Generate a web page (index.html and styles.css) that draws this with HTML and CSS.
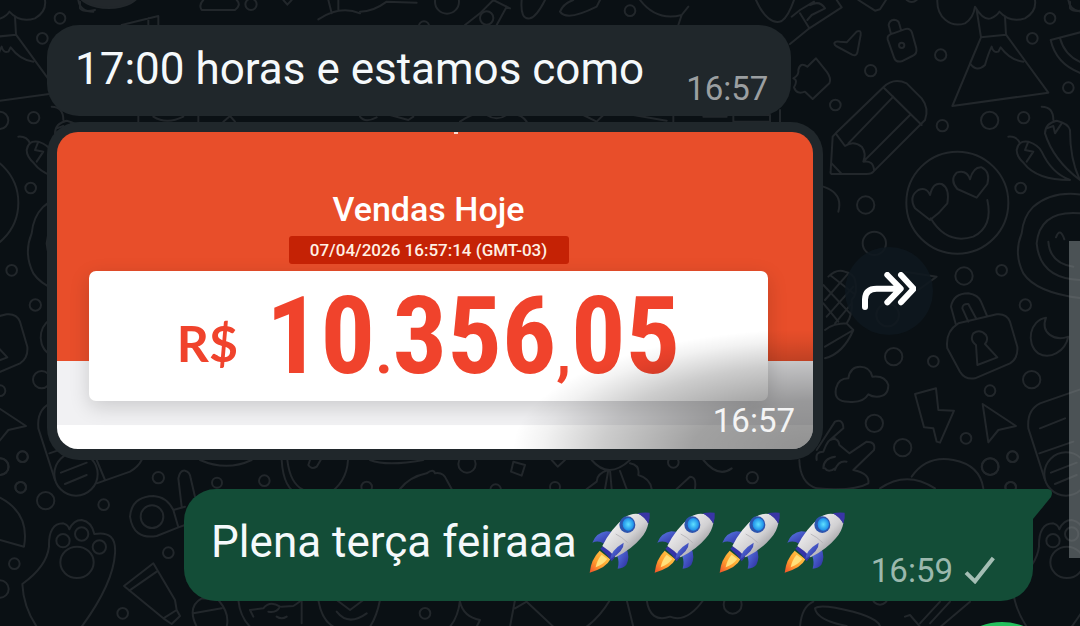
FILE: index.html
```html
<!DOCTYPE html>
<html lang="pt-BR">
<head>
    <meta charset="UTF-8">
    <meta name="viewport" content="width=device-width, initial-scale=1.0">
    <title>Conversa</title>
    <link rel="stylesheet" href="styles.css">
</head>
<body>

<svg class="wallpaper" viewBox="0 0 3240 1878" preserveAspectRatio="xMidYMin slice" aria-hidden="true">
    <defs>
        <g id="doodles">
            <!-- top right -->
            <g transform="translate(2160 0)">
                <path d="M108 0C130 50 160 75 185 63C205 50 215 20 222 0M215 50L240 30L282 5M240 40L268 85L365 22L350 0M262 60L275 45L315 25Q300 0 270 15M268 85L210 132"/>
                <path d="M415 0L465 32L480 28L498 0M560 0Q575 12 590 0"/>
                <path d="M343 130Q345 122 360 125L380 127L410 95Q424 88 422 105L412 158Q408 170 396 164L348 138Q343 135 343 130Z"/>
                <path d="M520 100L553 88Q570 82 576 98L589 145Q592 162 577 168L545 184Q527 188 522 172L503 118Q500 105 520 100ZM512 98L506 75Q508 60 522 59Q536 60 538 72L543 90"/>
                <circle cx="545" cy="136" r="8"/>
                <path d="M652 0C650 50 690 85 735 70Q760 55 765 20Q790 62 812 55Q830 48 838 35Q870 70 915 55Q950 35 945 0M770 30L783 112L858 104L855 50M783 112L697 318L985 278L858 104M783 112L750 190Q770 218 795 195Q805 160 815 140Q820 160 835 155L842 142Q870 180 910 185"/>
                <path d="M288 175L262 200Q240 185 235 210Q238 225 220 235Q235 240 222 262Q230 285 255 275L278 297L328 250Q335 235 320 215Z"/>
                <path d="M347 400L490 262Q520 232 560 250L605 295Q628 325 615 360L460 515Q455 522 440 522H335Q330 520 332 512L338 410ZM490 262L605 375M520 290L385 430M570 345L430 485M347 400L375 438Q400 420 425 440Q440 460 430 485Q460 480 462 510M335 490L365 522"/>
                <circle cx="712" cy="608" r="153"/>
                <path d="M630 660L585 625Q565 590 595 570Q620 560 630 585Q640 545 665 552Q690 565 682 610L655 640ZM770 593L712 567Q688 540 710 518Q740 508 750 538Q760 500 785 502Q812 515 802 552ZM802 600Q820 680 760 710Q680 735 632 655"/>
                <path d="M865 410Q890 408 900 430M890 450Q895 420 925 425Q955 435 965 455Q995 520 1050 540Q950 540 912 490Q890 470 890 450ZM925 425L915 450L940 455L920 485M965 320Q1000 320 1000 360M975 400Q975 370 1010 362Q1045 370 1050 390Q1050 480 1080 540Q1000 480 975 400ZM980 385L1000 378L1005 400L1025 370"/>
                <path d="M992 120L1100 92M992 120Q1010 200 1100 225M1020 115Q1035 170 1090 190"/>
                <path d="M1045 0Q1050 35 1090 35M310 560Q370 580 355 635"/>
                <circle cx="990" cy="55" r="16"/><circle cx="937" cy="115" r="16"/><circle cx="1045" cy="263" r="16"/><circle cx="662" cy="165" r="17"/><circle cx="452" cy="212" r="17"/><circle cx="346" cy="315" r="16"/><circle cx="667" cy="377" r="17"/><circle cx="809" cy="361" r="26"/><circle cx="911" cy="353" r="17"/><circle cx="902" cy="564" r="16"/><circle cx="437" cy="615" r="26"/>
                <path d="M0 345H150V365H40V345M180 330V365"/>
            </g>
            <!-- middle right -->
            <g transform="translate(2160 600)">
                <path d="M1090 -15Q1000 -30 940 20Q910 50 905 100Q880 160 910 220Q950 280 1090 295"/>
                <path d="M1080 40Q960 30 950 130Q960 240 1090 240M985 125Q990 190 1060 200M1008 112Q1020 80 1033 118"/>
                <circle cx="463" cy="130" r="35"/><circle cx="503" cy="345" r="34"/><circle cx="732" cy="228" r="26"/><circle cx="845" cy="211" r="16"/><circle cx="916" cy="315" r="17"/><circle cx="521" cy="470" r="26"/><circle cx="640" cy="484" r="16"/><circle cx="935" cy="539" r="26"/><circle cx="810" cy="572" r="16"/>
                <path d="M325 230Q350 205 375 215Q400 220 405 240Q415 280 395 300Q400 340 380 370L400 390Q370 460 315 475M315 390Q340 370 380 370M400 390L315 440M330 225L400 280M310 255L390 340M310 310L355 365M385 220L315 300M400 260L320 350M395 310L345 370M555 215L650 230L595 270"/>
                <path d="M715 370L830 343Q860 340 870 365L892 440Q895 475 870 490L765 535Q735 540 720 515L682 445Q675 395 715 370ZM708 375L693 320Q700 280 745 280Q775 285 783 305L800 345M745 365L727 325Q728 310 745 312L768 355M768 435Q748 420 760 400Q780 385 798 405Q806 420 795 432L832 472L772 495Z"/>
                <path d="M978 353C930 360 915 430 955 460C990 480 1035 455 1045 410C1005 425 960 400 978 353Z"/>
                <path d="M385 605Q340 605 348 565Q355 535 385 535Q390 500 420 500Q450 500 457 530Q495 525 505 555Q505 590 470 590Q455 590 445 583Q430 610 385 605Z"/>
                <path d="M585 582L648 565L655 630L702 632L660 728L650 725L640 685L612 682ZM788 612L888 678L835 690L805 727Z"/>
            </g>
            <!-- bottom right -->
            <g transform="translate(2160 1200)">
                <circle cx="463" cy="70" r="26"/><circle cx="548" cy="143" r="26"/><circle cx="738" cy="115" r="16"/><circle cx="878" cy="170" r="16"/><circle cx="811" cy="200" r="25"/><circle cx="97" cy="233" r="17"/><circle cx="872" cy="262" r="16"/><circle cx="38" cy="614" r="27"/><circle cx="480" cy="590" r="24"/>
                <path d="M290 265Q240 250 238 180M290 150L345 65Q370 55 370 85L330 120Q355 110 358 135L388 160L440 125Q468 125 462 150L400 210Q450 220 445 250Q400 275 290 265M290 180Q285 155 310 155Q325 110 345 115M310 205Q310 175 345 170M345 210Q355 180 380 185M315 205Q325 220 345 205"/>
                <path d="M480 265Q560 210 645 265M575 230Q620 165 700 180Q780 195 790 265"/>
                <path d="M1090 -35L960 10Q920 30 925 85L975 240M960 85L1035 55M958 160L1060 125"/>
                <ellipse cx="1038" cy="222" rx="65" ry="65"/>
                <path d="M993 218L1070 188M1005 252L1070 225M240 680Q245 620 280 605M285 625Q300 610 400 635Q490 660 480 690M285 625Q290 660 380 678M555 650L570 645L600 680M600 670L660 605M630 670L690 605M650 690L750 605"/>
            </g>
            <!-- bottom left -->
            <g transform="translate(0 1200)">
                <circle cx="67" cy="170" r="16"/><circle cx="62" cy="262" r="16"/><circle cx="137" cy="302" r="26"/><circle cx="311" cy="314" r="16"/><circle cx="475" cy="233" r="17"/><circle cx="651" cy="248" r="15"/><circle cx="793" cy="242" r="16"/><circle cx="505" cy="458" r="16"/><circle cx="43" cy="491" r="16"/><circle cx="0" cy="567" r="26"/><circle cx="368" cy="640" r="16"/><circle cx="0" cy="200" r="25"/>
                <path d="M110 680Q70 620 67 552Q140 500 147 440Q145 370 190 370Q205 375 208 388Q220 360 245 360Q275 365 283 402Q350 390 345 460Q340 550 245 680"/>
                <circle cx="189" cy="422" r="20"/><circle cx="245" cy="402" r="20"/><circle cx="298" cy="441" r="20"/><ellipse cx="231" cy="487" rx="50" ry="47"/>
                <path d="M0 293Q90 340 72 440L0 420"/>
                <circle cx="456" cy="350" r="34"/>
                <path d="M535 382L470 408Q400 420 390 350Q395 290 460 288Q500 290 520 330L555 320M520 330L535 382L555 375M545 320L535 235Q540 210 555 212Q570 215 572 235L585 290"/>
                <path d="M460 490L372 558L490 655L530 630L525 600ZM470 515L388 572M490 655L515 672L540 648L530 630"/>
                <path d="M290 180L315 240M290 250L390 215Q415 200 425 180M600 180Q680 215 755 180M845 180Q850 270 900 285H980Q1040 250 1044 180M862 180Q870 250 910 270M930 180L925 195Q935 210 950 200L962 180"/>
                <path d="M590 680Q560 620 605 595L655 600Q690 640 680 680M580 640L665 625M715 600Q720 650 750 680M760 650L750 630L790 625Q810 600 840 620Q830 640 805 635M845 620L880 618Q900 605 910 595M830 650Q845 660 860 650M905 600V670M955 600Q965 660 1000 680M1010 635Q1045 680 1100 640M1010 600L1050 630L1090 600M1140 600Q1130 650 1110 680M1380 600Q1375 650 1350 680M1380 605Q1390 650 1440 660L1430 680M1530 680L1545 600M1545 625L1580 605L1660 680M1830 600Q1800 650 1760 680M1880 600L1900 680M1940 600Q1950 670 2010 650Q2060 670 2110 600"/>
                <circle cx="1275" cy="640" r="16"/>
            </g>
            <!-- strips between the bubbles -->
            <g transform="translate(870 1365)">
                <path d="M240 15Q290 35 400 15M330 102Q360 65 410 55Q430 40 435 55Q460 50 470 75L485 102M670 20L705 30L695 62L663 50ZM785 15L803 35L825 15M905 15Q955 75 1020 15M955 45L945 102M960 45L965 102M890 102L920 80Q920 55 955 45M990 48L1010 102M1020 25Q1050 30 1045 60Q1080 70 1085 102M1160 102L1200 65Q1220 65 1215 100M1240 15Q1285 70 1325 40"/>
                <circle cx="531" cy="27" r="26"/><circle cx="230" cy="96" r="16"/><circle cx="617" cy="104" r="16"/><circle cx="795" cy="96" r="15"/><circle cx="1150" cy="22" r="16"/>
            </g>
            <path d="M1240 350L1225 360L1170 345M1380 365Q1430 330 1460 345Q1490 365 1520 345Q1560 335 1580 365M1750 345L1790 365L1810 345M1900 345L2000 362M2020 345V365M2110 350H2180M415 345V365M460 350Q500 375 550 350M595 345V365M670 365L690 348L705 365M1080 350Q1095 370 1130 352"/>
            <!-- top edge -->
            <path d="M240 5V25Q250 38 285 30M365 75L475 48V75M445 55V75M610 0Q595 15 605 30H705Q725 15 710 0M985 0L995 40M1015 0V30M955 58Q1020 15 1080 40M850 0L862 14L875 0"/>
            <path d="M1080 35Q1120 35 1160 5L1250 8M1395 75L1440 40L1480 0M1490 75L1520 20M1480 0L1530 25M1565 0Q1560 60 1590 55Q1610 50 1635 0M1680 35Q1690 10 1720 0M1680 35Q1700 65 1790 20L1800 0M1920 0Q1970 65 2045 45L2065 20M2045 45L2035 75"/>
            <circle cx="753" cy="13" r="17"/><circle cx="1341" cy="5" r="36"/><circle cx="1460" cy="54" r="20"/><circle cx="1890" cy="32" r="16"/><circle cx="1272" cy="80" r="16"/>
        </g>
    </defs>
    <use href="#doodles"/>
    <use href="#doodles" x="-2970"/>
    <use href="#doodles" x="2970"/>
    <ellipse class="blob" cx="326" cy="-24" rx="92" ry="48"/>
</svg>

<!-- rocket emoji, used by the outgoing message -->
<svg class="sprite" aria-hidden="true">
    <defs>
        <linearGradient id="hull" x1="0" y1="0" x2="1" y2="1">
            <stop offset="0.2" stop-color="#f4f3f4"/>
            <stop offset="0.55" stop-color="#d2d1d3"/>
            <stop offset="0.8" stop-color="#9b9a9e"/>
        </linearGradient>
        <linearGradient id="fin" x1="0" y1="0" x2="1" y2="1">
            <stop offset="0" stop-color="#5b7be8"/>
            <stop offset="1" stop-color="#2b2c9c"/>
        </linearGradient>
        <linearGradient id="flame" x1="1" y1="0" x2="0" y2="1">
            <stop offset="0" stop-color="#ffcf4d"/>
            <stop offset="0.6" stop-color="#ff9d2e"/>
            <stop offset="1" stop-color="#f0502a"/>
        </linearGradient>
        <radialGradient id="glass">
            <stop offset="0" stop-color="#5fe0ff"/>
            <stop offset="1" stop-color="#1c8ce8"/>
        </radialGradient>
        <symbol id="rocket" viewBox="0 0 186 186">
            <path fill="url(#fin)" d="M10 92Q22 62 52 58L75 60L45 95Q28 84 10 92Z"/>
            <path fill="url(#fin)" d="M84 130L112 108Q124 135 112 158Q104 168 86 170Q92 150 84 130Z"/>
            <path fill="url(#flame)" d="M32 116L64 142Q52 168 2 182Q6 142 32 116Z"/>
            <path fill="#ffe07a" d="M38 128L55 141Q42 158 20 166Q24 144 38 128Z"/>
            <path fill="#3433a8" d="M34 110L42 102Q66 116 78 136L68 148Q54 126 34 110Z"/>
            <path fill="url(#hull)" d="M40 102Q66 50 108 16Q128 2 150 6Q168 14 178 34Q174 58 156 78Q128 112 80 136Q62 116 40 102Z"/>
            <path fill="#3935a5" d="M146 4Q162 0 182 2Q184 18 178 36Q168 16 146 4Z"/>
            <path fill="none" stroke="#a9a8ad" stroke-width="2" d="M80 66Q98 74 116 92"/>
            <path fill="url(#fin)" d="M104 92Q106 116 64 142Q64 116 104 92Z"/>
            <ellipse cx="115" cy="38" rx="24" ry="25" fill="#2d55ae"/>
            <ellipse cx="118" cy="37" rx="17" ry="19" fill="url(#glass)"/>
        </symbol>
    </defs>
</svg>

<main class="chat">
    <div class="row">
        <div class="bubble bubble-in">
            <p class="text">17:00 horas e estamos como</p>
            <time class="time">16:57</time>
        </div>
    </div>

    <div class="row row-media">
        <div class="bubble bubble-media">
            <div class="sales">
                <span class="sales-dot"></span>
                <div class="sales-head">
                    <h2 class="sales-title">Vendas Hoje</h2>
                    <div class="sales-date">07/04/2026 16:57:14 (GMT-03)</div>
                </div>
                <div class="sales-card">
                    <span class="currency">R$</span>
                    <span class="amount">10<span class="sep">.</span>356<span class="sep">,</span>05</span>
                </div>
                <div class="shade"></div>
                <time class="time time-over">16:57</time>
            </div>
        </div>
        <button class="forward" type="button" aria-label="Encaminhar">
            <svg viewBox="0 0 162 114" width="54" height="38">
                <path d="M9 105V82Q10 50 44 50H108M76 9L116 50L76 91M117 9L155 50L117 91"/>
            </svg>
        </button>
    </div>

    <div class="row row-out">
        <div class="bubble bubble-out">
            <p class="text">Plena terça feiraaa</p>
            <span class="emojis" role="img" aria-label="quatro foguetes">
                <svg class="emoji"><use href="#rocket"/></svg>
                <svg class="emoji"><use href="#rocket"/></svg>
                <svg class="emoji"><use href="#rocket"/></svg>
                <svg class="emoji"><use href="#rocket"/></svg>
            </span>
            <time class="time">16:59</time>
            <svg class="check" viewBox="0 0 96 84"><path d="M6 50L33 76L88 6"/></svg>
            <svg class="tail" viewBox="0 0 20 30"><path d="M0 0H15Q21 1 18 8L0 30Z"/></svg>
        </div>
    </div>
</main>

<div class="scrollbar"></div>
<svg class="send" viewBox="0 0 120 4" aria-hidden="true"><circle cx="60" cy="60" r="60"/></svg>

</body>
</html>
```
FILE: styles.css
```css
* {
    box-sizing: border-box;
}

body {
    position: relative;
    margin: 0;
    min-height: 100vh;
    overflow: hidden;
    background-color: #0a1014;
    font-family: Roboto, "Noto Sans", sans-serif;
}

.wallpaper {
    position: absolute;
    top: 0;
    left: 0;
    width: 100%;
    height: 100%;
    fill: none;
    stroke: #22272b;
    stroke-width: 6;
    stroke-linecap: round;
    stroke-linejoin: round;
}

.blob {
    fill: #22272b;
}

.sprite {
    position: absolute;
    width: 0;
    height: 0;
}

.chat {
    position: relative;
    display: flex;
    flex-direction: column;
    padding: 25px 47px 24px;
}

.row {
    display: flex;
}

.bubble {
    display: flex;
    border-radius: 32px;
    background-color: #20272b;
}

.bubble-in {
    height: 91px;
    gap: 42px;
    padding: 0 23px 0 28px;
}

.text {
    margin: 0;
    font-size: 44px;
    line-height: 88px;
    color: #f5f9fb;
    white-space: nowrap;
}

.time {
    align-self: flex-end;
    font-size: 33px;
    line-height: 40px;
    color: #9b9fa1;
    margin-bottom: 7px;
}

.row-media {
    align-items: center;
    gap: 22px;
    margin-top: 6px;
}

.bubble-media {
    flex: 0 1 776px;
    padding: 10px 10px 11px;
}

/* screenshot of the sales panel */
.sales {
    position: relative;
    flex: 1;
    height: 317px;
    padding: 55px 45px 0 32px;
    border-radius: 21px;
    overflow: hidden;
    background: linear-gradient(#e84e2a 229px, #f1f1f3 229px, #f1f1f3 293px, #fff 293px);
}

.sales-head {
    display: flex;
    flex-direction: column;
    align-items: center;
}

.sales-title {
    margin: 0;
    font-size: 34px;
    font-weight: 500;
    line-height: 44px;
    color: #fff;
}

.sales-date {
    width: 280px;
    margin-top: 5px;
    border-radius: 3px;
    background-color: #c52205;
    font-size: 17px;
    font-weight: 500;
    line-height: 28px;
    text-align: center;
    color: #fff0e4;
}

.sales-dot {
    position: absolute;
    top: 0;
    left: 397px;
    width: 4px;
    height: 2px;
    background-color: #ffd9cc;
}

.sales-card {
    display: flex;
    align-items: center;
    justify-content: center;
    gap: 28px;
    height: 130px;
    margin-top: 7px;
    border-radius: 7px;
    background-color: #fff;
    box-shadow: 0 6px 20px rgba(0, 0, 0, 0.16);
    font-weight: 700;
    line-height: 130px;
    color: #f0432c;
}

.currency {
    padding-top: 14px;
    font-family: Lato, sans-serif;
    font-size: 50px;
}

.amount {
    font-family: "Roboto Condensed", "Liberation Sans Narrow", sans-serif;
    font-size: 108px;
}

.sep {
    font-size: 60px;
    line-height: 0;
}

.shade {
    position: absolute;
    right: 0;
    bottom: 0;
    width: 300px;
    height: 120px;
    background: radial-gradient(farthest-side at 100% 100%, rgba(0, 0, 0, 0.43), rgba(0, 0, 0, 0.37) 40%, rgba(0, 0, 0, 0.2) 70%, rgba(0, 0, 0, 0.05) 90%, transparent);
}

.time-over {
    position: absolute;
    right: 18px;
    bottom: 1px;
    color: #f4f4f4;
}

.forward {
    display: flex;
    align-items: center;
    justify-content: center;
    width: 88px;
    height: 88px;
    padding: 0;
    border: none;
    border-radius: 50%;
    background-color: rgba(14, 24, 30, 0.85);
    cursor: pointer;
}

.forward path {
    fill: none;
    stroke: #fff;
    stroke-width: 18;
    stroke-linecap: round;
    stroke-linejoin: round;
}

.row-out {
    justify-content: flex-end;
    margin-top: 29px;
}

.bubble-out {
    position: relative;
    align-items: center;
    height: 112px;
    padding: 0 37px 0 27px;
    border-top-right-radius: 0;
    background-color: #134d37;
}

.bubble-out .text {
    line-height: 106px;
    align-self: flex-start;
}

.emojis {
    display: flex;
    gap: 3px;
    margin: 0 25px 4px 12px;
}

.emoji {
    width: 62px;
    height: 62px;
}

.bubble-out .time {
    margin-bottom: 10px;
    color: #9bb8ad;
}

.check {
    align-self: flex-end;
    width: 32px;
    height: 28px;
    margin: 0 0 17px 11px;
    fill: none;
    stroke: #a4beb4;
    stroke-width: 12;
}

.tail {
    position: absolute;
    top: 0;
    left: 100%;
    width: 20px;
    height: 30px;
    fill: #134d37;
}

.scrollbar {
    position: absolute;
    top: 241px;
    right: 0;
    width: 11px;
    height: 317px;
    background-color: rgba(130, 136, 138, 0.55);
}

/* top edge of the round send button */
.send {
    position: absolute;
    bottom: 0;
    right: 18px;
    width: 120px;
    height: 4px;
    fill: #24c05d;
}
```
